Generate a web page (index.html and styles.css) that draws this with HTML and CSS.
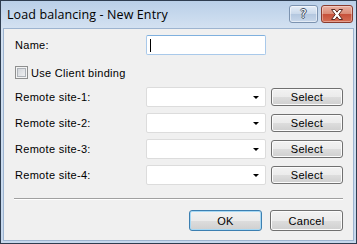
FILE: index.html
```html
<!DOCTYPE html>
<html lang="en">
<head>
    <meta charset="UTF-8">
    <title>Load balancing - New Entry</title>
    <link rel="stylesheet" href="styles.css">
</head>
<body>
    <div class="window">
        <div class="titlebar">
            <span class="title">Load balancing - New Entry</span>
            <div class="caption-buttons">
                <span class="cap help">?</span>
                <span class="cap close">
                    <svg width="14" height="11" viewBox="0 0 14 11">
                        <path d="M1.5 0.5 H5 L7 3.2 L9 0.5 H12.5 L8.8 5.5 L12.5 10.5 H9 L7 7.8 L5 10.5 H1.5 L5.2 5.5 Z" fill="#fff" stroke="#5a2a22" stroke-width="1"/>
                    </svg>
                </span>
            </div>
        </div>

        <div class="client">
            <div class="form">
                <div class="field name-field">
                    <label>Name:</label>
                    <div class="textbox focused"><span class="caret"></span></div>
                </div>

                <div class="check-field">
                    <span class="checkbox"></span>
                    <span>Use Client binding</span>
                </div>

                <div class="field">
                    <label>Remote site-1:</label>
                    <div class="combo"><span class="arrow"></span></div>
                    <span class="btn select">Select</span>
                </div>
                <div class="field">
                    <label>Remote site-2:</label>
                    <div class="combo"><span class="arrow"></span></div>
                    <span class="btn select">Select</span>
                </div>
                <div class="field">
                    <label>Remote site-3:</label>
                    <div class="combo"><span class="arrow"></span></div>
                    <span class="btn select">Select</span>
                </div>
                <div class="field">
                    <label>Remote site-4:</label>
                    <div class="combo"><span class="arrow"></span></div>
                    <span class="btn select">Select</span>
                </div>
            </div>

            <div class="separator"></div>

            <div class="footer">
                <span class="btn default">OK</span>
                <span class="btn">Cancel</span>
            </div>
        </div>
    </div>
</body>
</html>
```

FILE: styles.css
```css
* {
    box-sizing: border-box;
}
body {
    margin: 0;
    font-family: "Liberation Sans", Arial, sans-serif;
    font-size: 11px;
    letter-spacing: 0.3px;
    color: #000;
    background: #fff;
}
.window {
    width: 357px;
    height: 244px;
    border: 1px solid #2e3d50;
    background: linear-gradient(#b9cfe8, #d3e1f1 27px, #c6d8ed);
    padding: 0 2px 2px;
    display: flex;
    flex-direction: column;
}
.titlebar {
    height: 27px;
    margin: 0 -2px;
    padding: 0 3px 0 6px;
    display: flex;
    align-items: flex-start;
}
.title {
    font-family: "Open Sans", "Noto Sans", sans-serif;
    font-size: 12.5px;
    letter-spacing: 0.1px;
    line-height: 27px;
}
.caption-buttons {
    margin-left: auto;
    margin-top: 4px;
    display: flex;
    gap: 3px;
}
.cap {
    height: 18px;
    border-radius: 3px;
    display: flex;
    align-items: center;
    justify-content: center;
}
.help {
    width: 29px;
    border: 1px solid #7c93b0;
    background: linear-gradient(#e6eef8, #c9d8ea 50%, #b3c7df 51%, #c8d7ea);
    box-shadow: inset 0 0 0 1px rgba(255,255,255,0.5);
    font-family: "DejaVu Sans", sans-serif;
    font-size: 12px;
    letter-spacing: 0;
    color: #fff;
    text-shadow: 1px 0 #3f4d5f, -1px 0 #3f4d5f, 0 1px #3f4d5f, 0 -1px #3f4d5f;
}
.close {
    width: 32px;
    border: 1px solid #8a3b2e;
    background: linear-gradient(#eab1a3, #d98a75 50%, #c6503a 51%, #d56e55);
    box-shadow: inset 0 0 0 1px rgba(255,255,255,0.35);
}
.client {
    flex: 1;
    background: #f0f0f0;
    border: 1px solid #9db4d0;
    padding: 0 10px;
}
.form {
    padding: 6px 0 0 1px;
    display: flex;
    flex-direction: column;
    gap: 6px;
}
.field {
    height: 20px;
    display: flex;
    align-items: center;
}
.field label {
    width: 131px;
}
.name-field {
    margin-bottom: 5px;
}
.textbox {
    width: 120px;
    height: 20px;
    background: #fff;
    border: 1px solid #c5d9ee;
    border-radius: 2px;
    padding: 3px 0 0 3px;
}
.textbox.focused {
    border-color: #a9c9ea;
    border-top-color: #7fb0de;
}
.caret {
    display: block;
    width: 1px;
    height: 13px;
    background: #000;
}
.check-field {
    height: 13px;
    margin-bottom: 2px;
    display: flex;
    align-items: center;
    gap: 3px;
}
.checkbox {
    width: 13px;
    height: 13px;
    border: 1px solid #8e8f8f;
    box-shadow: inset 0 0 0 1px #f4f4f4, inset 0 0 0 2px #aeb3b9;
    background-image: linear-gradient(135deg, #cbcfd5, #f6f6f6);
}
.combo {
    width: 120px;
    height: 20px;
    background: #fff;
    border: 1px solid #dcdcdc;
    border-radius: 2px;
    display: flex;
    align-items: center;
    justify-content: flex-end;
    padding-right: 6px;
}
.arrow {
    width: 0;
    height: 0;
    border-left: 3px solid transparent;
    border-right: 3px solid transparent;
    border-top: 3px solid #000;
    margin-top: 1px;
}
.btn {
    width: 73px;
    height: 21px;
    border: 1px solid #707070;
    border-radius: 3px;
    background: linear-gradient(#f2f2f2, #ebebeb 50%, #dddddd 51%, #cfcfcf);
    box-shadow: inset 0 0 0 1px #fbfbfb;
    display: flex;
    align-items: center;
    justify-content: center;
}
.select {
    width: 72px;
    height: 18px;
    margin-left: 5px;
}
.btn.default {
    border-color: #3c7fb1;
    box-shadow: inset 0 0 0 1px #a6d8f4;
}
.separator {
    margin-top: 13px;
    border-top: 1px solid #a0a0a0;
    border-bottom: 1px solid #fff;
}
.footer {
    margin-top: 10px;
    display: flex;
    justify-content: flex-end;
    gap: 8px;
}
```
